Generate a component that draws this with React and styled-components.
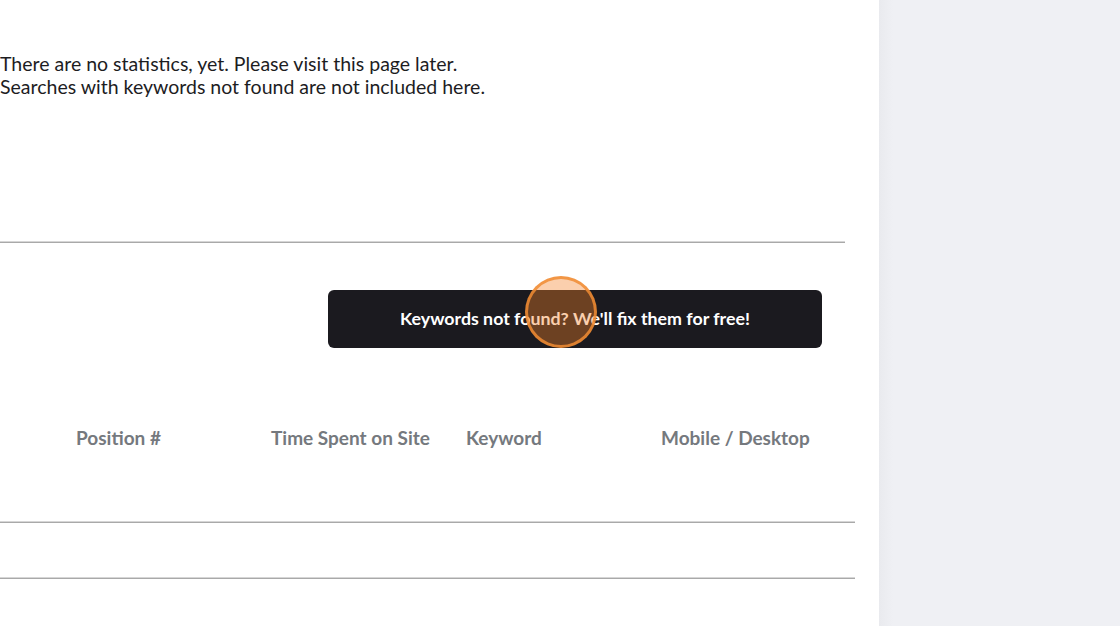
import React from "react";
import styled, { createGlobalStyle } from "styled-components";

const Global = createGlobalStyle`
  html, body { margin: 0; padding: 0; background: #ffffff; }
  body { font-family: Lato, "Noto Sans", sans-serif; }
`;

const Page = styled.div`
  display: flex;
  width: 1120px;
  height: 626px;
  overflow: hidden;
`;

const Main = styled.main`
  width: 879px;
  flex: none;
  background: #ffffff;
  padding-top: 52px;
  box-sizing: border-box;
`;

const Side = styled.aside`
  flex: 1;
  background: linear-gradient(to right, #e9eaee 0px, #eff0f4 14px);
`;

const Notice = styled.p`
  margin: 0;
  font-size: 19.5px;
  line-height: 23px;
  color: #1d1d1f;
`;

const Divider = styled.hr`
  margin: ${(p) => p.$top || 0}px 0 0 0;
  width: ${(p) => p.$width}px;
  border: none;
  border-top: 1px solid #d6d6d6;
  border-bottom: 1px solid #a9a9a9;
  height: 0;
`;

const ButtonRow = styled.div`
  display: flex;
  justify-content: flex-end;
  width: 822px;
  margin-top: 47px;
`;

const CtaButton = styled.button`
  position: relative;
  width: 494px;
  height: 58px;
  padding: 0 0 2px;
  border: none;
  border-radius: 6px;
  background: #1b1a1f;
  color: #ffffff;
  font-family: Lato, "Noto Sans", sans-serif;
  font-weight: 700;
  font-size: 17.8px;
  cursor: pointer;
`;

const ClickMark = styled.span`
  position: absolute;
  left: 197px;
  top: -14px;
  width: 66px;
  height: 66px;
  border-radius: 50%;
  background: rgba(245, 130, 40, 0.38);
  border: 3px solid rgba(240, 140, 50, 0.85);
  pointer-events: none;
`;

const HeaderRow = styled.div`
  display: grid;
  grid-template-columns: repeat(4, 195px);
  padding-left: 76px;
  margin-top: 77px;
  height: 24px;
  align-items: center;
`;

const HeadCell = styled.div`
  font-weight: 700;
  font-size: 19px;
  color: #75797e;
  white-space: nowrap;
`;

export default function App() {
  return (
    <>
      <Global />
      <Page>
        <Main>
          <Notice>There are no statistics, yet. Please visit this page later.</Notice>
          <Notice>Searches with keywords not found are not included here.</Notice>
          <Divider $top={143} $width={845} />
          <ButtonRow>
            <CtaButton>
              Keywords not found? We'll fix them for free!
              <ClickMark />
            </CtaButton>
          </ButtonRow>
          <HeaderRow>
            <HeadCell>Position #</HeadCell>
            <HeadCell>Time Spent on Site</HeadCell>
            <HeadCell>Keyword</HeadCell>
            <HeadCell>Mobile / Desktop</HeadCell>
          </HeaderRow>
          <Divider $top={72} $width={855} />
          <Divider $top={54} $width={855} />
        </Main>
        <Side />
      </Page>
    </>
  );
}
